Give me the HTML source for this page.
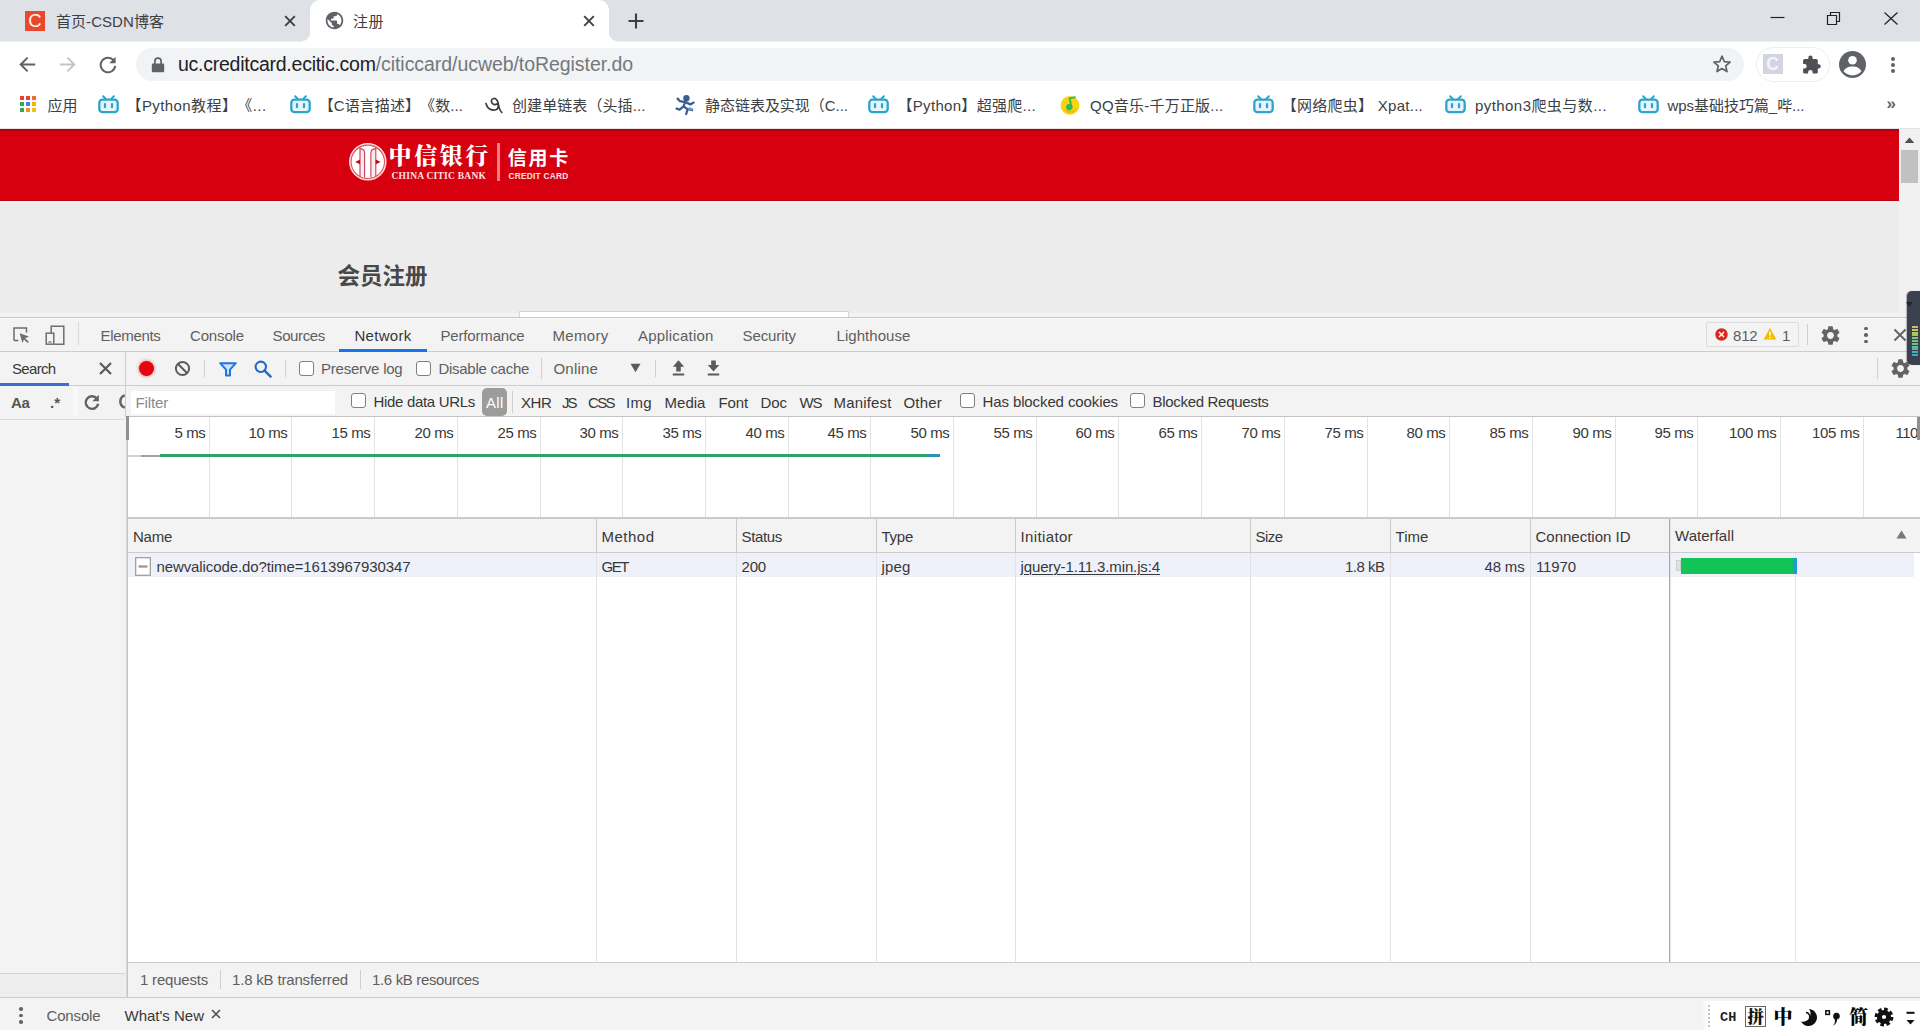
<!DOCTYPE html>
<html lang="zh">
<head>
<meta charset="utf-8">
<title>注册</title>
<style>
*{box-sizing:border-box;margin:0;padding:0}
html,body{width:1920px;height:1030px;overflow:hidden;background:#fff}
body{position:relative;font-family:"Liberation Sans","Noto Sans CJK SC",sans-serif;color:#333;text-spacing-trim:space-all}
.a{position:absolute;white-space:nowrap}
svg{position:absolute;overflow:visible}
.cb{position:absolute;width:15px;height:15px;border:1.2px solid #808080;border-radius:3px;background:#fff}
.vs{position:absolute;width:1px;background:#ccc}
</style>
</head>
<body>
<div class="a" style="left:0px;top:0px;width:1920px;height:41px;background:#dee1e6;"></div>
<div class="a" style="left:310px;top:0;width:299px;height:41px;background:#fff;border-radius:10px 10px 0 0"></div>
<svg style="left:302px;top:33px;" width="8" height="8" viewBox="0 0 8 8"><path d="M8 0 V8 H0 A8 8 0 0 0 8 0Z" fill="#fff"/></svg>
<svg style="left:609px;top:33px;" width="8" height="8" viewBox="0 0 8 8"><path d="M0 0 V8 H8 A8 8 0 0 1 0 0Z" fill="#fff"/></svg>
<div class="a" style="left:0px;top:41px;width:1920px;height:47px;background:#fff;"></div>
<div class="a" style="left:0px;top:41px;width:302px;height:1px;background:#eef0f3;"></div>
<div class="a" style="left:617px;top:41px;width:1303px;height:1px;background:#eef0f3;"></div>
<div class="a" style="left:0px;top:88px;width:1920px;height:40px;background:#fff;"></div>
<div class="a" style="left:0px;top:128px;width:1920px;height:1px;background:#e4e4e6;"></div>
<div class="a" style="left:25px;top:11px;width:20px;height:20px;background:#e9482d"></div>
<span class="a" style="left:28.2px;top:8.19px;font-size:18.5px;line-height:26px;color:#fff6e8;">C</span>
<span class="a" style="left:56px;top:10.90px;font-size:15px;line-height:21px;color:#3c4043;letter-spacing:0.056px;">首页-CSDN博客</span>
<svg style="left:283px;top:14px;" width="14" height="14" viewBox="0 0 14 14"><path d="M2.2 2.2 L11.8 11.8 M11.8 2.2 L2.2 11.8" stroke="#3c4043" stroke-width="1.9" fill="none"/></svg>
<svg style="left:323.6px;top:10.3px;" width="21" height="21" viewBox="0 0 24 24"><path d="M12 2C6.480 2 2 6.480 2 12s4.480 10 10 10 10-4.480 10-10S17.520 2 12 2zm-1 17.930c-3.950-.490-7-3.850-7-7.930 0-.620.080-1.210.210-1.790L9 15v1c0 1.100.900 2 2 2v1.930zm6.900-2.540c-.260-.810-1-1.390-1.900-1.390h-1v-3c0-.550-.450-1-1-1H8v-2h2c.550 0 1-.450 1-1V7h2c1.100 0 2-.900 2-2v-.410c2.930 1.190 5 4.060 5 7.410 0 2.080-.800 3.970-2.100 5.390z" fill="#5f6368"/></svg>
<span class="a" style="left:353px;top:10.90px;font-size:15px;line-height:21px;color:#3c4043;letter-spacing:0.492px;">注册</span>
<svg style="left:582px;top:14px;" width="14" height="14" viewBox="0 0 14 14"><path d="M2.2 2.2 L11.8 11.8 M11.8 2.2 L2.2 11.8" stroke="#3c4043" stroke-width="1.9" fill="none"/></svg>
<svg style="left:627px;top:12px;" width="18" height="18" viewBox="0 0 18 18"><path d="M9 1.5 V16.5 M1.5 9 H16.5" stroke="#3c4043" stroke-width="2.1" fill="none"/></svg>
<svg style="left:1770px;top:10px;" width="16" height="16" viewBox="0 0 16 16"><path d="M0.5 7.5 H14.5" stroke="#222" stroke-width="1.2"/></svg>
<svg style="left:1826px;top:11px;" width="16" height="16" viewBox="0 0 16 16"><path d="M1.5 4.5 H10.5 V13.5 H1.5 Z M4.5 4.5 V1.5 H13.5 V10.5 H10.5" stroke="#222" stroke-width="1.2" fill="none"/></svg>
<svg style="left:1883px;top:11px;" width="16" height="16" viewBox="0 0 16 16"><path d="M1.5 1.5 L14.5 13.5 M14.5 1.5 L1.5 13.5" stroke="#222" stroke-width="1.2" fill="none"/></svg>
<svg style="left:18px;top:55px;" width="19" height="19" viewBox="0 0 19 19"><path d="M17.2 9.5 H3 M9.6 2.6 L2.7 9.5 L9.6 16.4" stroke="#5f6368" stroke-width="2" fill="none"/></svg>
<svg style="left:58px;top:55px;" width="19" height="19" viewBox="0 0 19 19"><path d="M1.8 9.5 H16 M9.4 2.6 L16.3 9.5 L9.4 16.4" stroke="#c3c5c8" stroke-width="2" fill="none"/></svg>
<svg style="left:98px;top:55px;" width="20" height="20" viewBox="0 0 20 20"><path d="M15.6 5.4 A7.3 7.3 0 1 0 17.2 10.8" stroke="#5f6368" stroke-width="2" fill="none"/><path d="M17.6 1.8 V8.2 H11.2 Z" fill="#5f6368"/></svg>
<div class="a" style="left:136px;top:48px;width:1608px;height:33px;background:#f1f3f4;border-radius:17px"></div>
<svg style="left:151px;top:57px;" width="14" height="16" viewBox="0 0 14 16"><path d="M2 6.6 H12 a1.2 1.2 0 0 1 1.2 1.2 V14 a1.2 1.2 0 0 1 -1.2 1.2 H2 A1.2 1.2 0 0 1 .8 14 V7.8 A1.2 1.2 0 0 1 2 6.6Z" fill="#5f6368"/><path d="M3.9 7 V4.3 a3.1 3.1 0 0 1 6.2 0 V7" stroke="#5f6368" stroke-width="1.7" fill="none"/></svg>
<span class="a" style="left:178px;top:50.54px;font-size:19.5px;line-height:27px;color:#202124;letter-spacing:-0.251px;">uc.creditcard.ecitic.com</span>
<span class="a" style="left:375.7px;top:50.54px;font-size:19.5px;line-height:27px;color:#74787c;letter-spacing:-0.058px;">/citiccard/ucweb/toRegister.do</span>
<svg style="left:1712px;top:54px;" width="20" height="20" viewBox="0 0 20 20"><path d="M10 2.2 L12.3 7.6 L18.1 8.1 L13.7 11.9 L15 17.6 L10 14.6 L5 17.6 L6.3 11.9 L1.9 8.1 L7.7 7.6 Z" stroke="#5f6368" stroke-width="1.7" fill="none" stroke-linejoin="round"/></svg>
<div class="a" style="left:1756px;top:47px;width:74px;height:35px;background:#fff;border:1.5px solid #eceef0;border-radius:18px"></div>
<div class="a" style="left:1763px;top:54px;width:20px;height:20px;background:#d3d4e2"></div>
<span class="a" style="left:1766.2px;top:52.34px;font-size:17.5px;line-height:24px;color:#f4f4fa;font-weight:700;">C</span>
<svg style="left:1802px;top:55px;" width="20" height="20" viewBox="0 0 20 20"><path d="M17.1 9.2 h-1.3 V5.7 c0-.95-.8-1.7-1.7-1.7 h-3.5 V2.7 a2.15 2.15 0 0 0 -4.3 0 V4 H2.8 C1.85 4 1.1 4.75 1.1 5.7 V9 h1.3 a2.3 2.3 0 0 1 0 4.6 H1.1 v3.3 c0 .95.75 1.7 1.7 1.7 h3.3 v-1.3 a2.3 2.3 0 0 1 4.6 0 v1.3 h3.4 c.9 0 1.7-.75 1.7-1.7 v-3.5 h1.3 a2.15 2.15 0 0 0 0-4.2z" fill="#4d5156"/></svg>
<svg style="left:1839px;top:51px;" width="27" height="27" viewBox="0 0 27 27"><circle cx="13.5" cy="13.5" r="13.5" fill="#5f6368"/><circle cx="13.5" cy="9.3" r="4.3" fill="#fff"/><path d="M4.6 20.2 c1.6-3.4 5.4-4.6 8.9-4.6 s7.3 1.2 8.9 4.6 a11.4 11.4 0 0 1 -17.8 0z" fill="#fff"/></svg>
<div class="a" style="left:1890.6px;top:56.7px;width:4px;height:4px;border-radius:50%;background:#5f6368"></div>
<div class="a" style="left:1890.6px;top:63px;width:4px;height:4px;border-radius:50%;background:#5f6368"></div>
<div class="a" style="left:1890.6px;top:69.3px;width:4px;height:4px;border-radius:50%;background:#5f6368"></div>
<div class="a" style="left:20px;top:96px;width:4px;height:4px;background:#e94235"></div>
<div class="a" style="left:26px;top:96px;width:4px;height:4px;background:#e94235"></div>
<div class="a" style="left:32px;top:96px;width:4px;height:4px;background:#ee6a3a"></div>
<div class="a" style="left:20px;top:102px;width:4px;height:4px;background:#34a853"></div>
<div class="a" style="left:26px;top:102px;width:4px;height:4px;background:#3a86e8"></div>
<div class="a" style="left:32px;top:102px;width:4px;height:4px;background:#f4b400"></div>
<div class="a" style="left:20px;top:108px;width:4px;height:4px;background:#34a853"></div>
<div class="a" style="left:26px;top:108px;width:4px;height:4px;background:#f0932b"></div>
<div class="a" style="left:32px;top:108px;width:4px;height:4px;background:#f4c20d"></div>
<span class="a" style="left:47.5px;top:94.90px;font-size:15px;line-height:21px;color:#3c4043;letter-spacing:-0.008px;">应用</span>
<svg style="left:98px;top:95px;" width="21" height="19" viewBox="0 0 21 19"><path d="M5.2 1.2 L8.2 4.4 M15.8 1.2 L12.8 4.4" stroke="#2ea3cf" stroke-width="2" stroke-linecap="round"/><rect x="1.3" y="4.6" width="18.4" height="12.6" rx="3.2" fill="#e4f5fb" stroke="#2ea3cf" stroke-width="2.3"/><path d="M7 9 V12.2 M14 9 V12.2" stroke="#2ea3cf" stroke-width="2.2" stroke-linecap="round"/></svg>
<span class="a" style="left:126.5px;top:94.90px;font-size:15px;line-height:21px;color:#3c4043;letter-spacing:0.414px;">【Python教程】《...</span>
<svg style="left:289.6px;top:95px;" width="21" height="19" viewBox="0 0 21 19"><path d="M5.2 1.2 L8.2 4.4 M15.8 1.2 L12.8 4.4" stroke="#2ea3cf" stroke-width="2" stroke-linecap="round"/><rect x="1.3" y="4.6" width="18.4" height="12.6" rx="3.2" fill="#e4f5fb" stroke="#2ea3cf" stroke-width="2.3"/><path d="M7 9 V12.2 M14 9 V12.2" stroke="#2ea3cf" stroke-width="2.2" stroke-linecap="round"/></svg>
<span class="a" style="left:318.7px;top:94.90px;font-size:15px;line-height:21px;color:#3c4043;letter-spacing:0.080px;">【C语言描述】《数...</span>
<svg style="left:484px;top:95px;" width="20" height="20" viewBox="0 0 20 20"><path d="M2 8.5 c1 4 4 7 9 6.5 c2.5-.3 3.5-2.5 3.3-5.5 c-.2-3.5-2.2-6.3-4.6-6 c-2.3.3-3 3-1.5 4.8 c1.3 1.5 3.6 1.4 5.5.2 M14.4 9 c.5 3.5 1.4 6.500 3.4 8.5" stroke="#3b3b3b" stroke-width="1.7" fill="none" stroke-linecap="round"/></svg>
<span class="a" style="left:512px;top:94.90px;font-size:15px;line-height:21px;color:#3c4043;letter-spacing:0.089px;">创建单链表（头插...</span>
<svg style="left:675px;top:94px;" width="21" height="21" viewBox="0 0 21 21"><circle cx="11.4" cy="4.2" r="3.2" fill="#3d5f8f"/><path d="M10.5 6.5 L8.6 12.4 L12.6 15.2 L11.2 20 M8.600 12.4 L4.6 15.6 L1.6 14.6 M9.8 8.2 L5 7.2 L2.6 4.6 M11 8.4 L15.4 10.4 L18.6 8.6 M12.6 15.2 L17.2 16" stroke="#3d5f8f" stroke-width="2.3" fill="none" stroke-linecap="round" stroke-linejoin="round"/><path d="M14 13 l4 1.5 l-.8 2.2 l-3.800 -1z" fill="#58a0dc"/></svg>
<span class="a" style="left:705px;top:94.90px;font-size:15px;line-height:21px;color:#3c4043;letter-spacing:-0.029px;">静态链表及实现（C...</span>
<svg style="left:868px;top:95px;" width="21" height="19" viewBox="0 0 21 19"><path d="M5.2 1.2 L8.2 4.4 M15.8 1.2 L12.8 4.4" stroke="#2ea3cf" stroke-width="2" stroke-linecap="round"/><rect x="1.3" y="4.6" width="18.4" height="12.6" rx="3.2" fill="#e4f5fb" stroke="#2ea3cf" stroke-width="2.3"/><path d="M7 9 V12.2 M14 9 V12.2" stroke="#2ea3cf" stroke-width="2.2" stroke-linecap="round"/></svg>
<span class="a" style="left:897.5px;top:94.90px;font-size:15px;line-height:21px;color:#3c4043;letter-spacing:0.307px;">【Python】超强爬...</span>
<svg style="left:1060px;top:95px;" width="20" height="20" viewBox="0 0 20 20"><circle cx="10" cy="10.4" r="9.4" fill="#f8d312"/><path d="M3.4 12.5 a6.8 6.800 0 0 0 13.2 0 c-2 2.6-4.400 3.6-6.600 3.600 s-4.600-1-6.600-3.600z" fill="#e9b80c"/><circle cx="9.2" cy="12.2" r="3.1" fill="#2dbb55"/><path d="M11.6 12.4 L9.6 3.4 L14.8 2.2" stroke="#2dbb55" stroke-width="2" fill="none" stroke-linecap="round" stroke-linejoin="round"/></svg>
<span class="a" style="left:1090px;top:94.90px;font-size:15px;line-height:21px;color:#3c4043;letter-spacing:0.221px;">QQ音乐-千万正版...</span>
<svg style="left:1253px;top:95px;" width="21" height="19" viewBox="0 0 21 19"><path d="M5.2 1.2 L8.2 4.4 M15.8 1.2 L12.8 4.4" stroke="#2ea3cf" stroke-width="2" stroke-linecap="round"/><rect x="1.3" y="4.6" width="18.4" height="12.6" rx="3.2" fill="#e4f5fb" stroke="#2ea3cf" stroke-width="2.3"/><path d="M7 9 V12.2 M14 9 V12.2" stroke="#2ea3cf" stroke-width="2.2" stroke-linecap="round"/></svg>
<span class="a" style="left:1281.8px;top:94.90px;font-size:15px;line-height:21px;color:#3c4043;letter-spacing:0.262px;">【网络爬虫】 Xpat...</span>
<svg style="left:1445px;top:95px;" width="21" height="19" viewBox="0 0 21 19"><path d="M5.2 1.2 L8.2 4.4 M15.8 1.2 L12.8 4.4" stroke="#2ea3cf" stroke-width="2" stroke-linecap="round"/><rect x="1.3" y="4.6" width="18.4" height="12.6" rx="3.2" fill="#e4f5fb" stroke="#2ea3cf" stroke-width="2.3"/><path d="M7 9 V12.2 M14 9 V12.2" stroke="#2ea3cf" stroke-width="2.2" stroke-linecap="round"/></svg>
<span class="a" style="left:1475px;top:94.90px;font-size:15px;line-height:21px;color:#3c4043;letter-spacing:0.436px;">python3爬虫与数...</span>
<svg style="left:1638px;top:95px;" width="21" height="19" viewBox="0 0 21 19"><path d="M5.2 1.2 L8.2 4.4 M15.8 1.2 L12.8 4.4" stroke="#2ea3cf" stroke-width="2" stroke-linecap="round"/><rect x="1.3" y="4.6" width="18.4" height="12.6" rx="3.2" fill="#e4f5fb" stroke="#2ea3cf" stroke-width="2.3"/><path d="M7 9 V12.2 M14 9 V12.2" stroke="#2ea3cf" stroke-width="2.2" stroke-linecap="round"/></svg>
<span class="a" style="left:1667.5px;top:94.90px;font-size:15px;line-height:21px;color:#3c4043;letter-spacing:-0.041px;">wps基础技巧篇_哔...</span>
<span class="a" style="left:1886.5px;top:91.71px;font-size:17px;line-height:24px;color:#5f6368;font-weight:700;">»</span>
<div class="a" style="left:0px;top:129px;width:1899px;height:188px;background:#ececec;"></div>
<div class="a" style="left:0px;top:129px;width:1899px;height:72px;background:#d7000f;border-top:2px solid #b4000d;border-bottom:1px solid #b8000d"></div>
<div class="a" style="left:0px;top:201px;width:1899px;height:2px;background:#f4f4f8;"></div>
<div class="a" style="left:1899px;top:129px;width:21px;height:188px;background:#f1f1f1;"></div>
<svg style="left:1904px;top:136px;" width="11" height="8" viewBox="0 0 11 8"><path d="M5.500 1.400 L10.300 7 H.700 Z" fill="#505050"/></svg>
<div class="a" style="left:1901px;top:150px;width:17px;height:33px;background:#c1c1c1;"></div>
<svg style="left:348.5px;top:143.1px;" width="37.6" height="37.6" viewBox="0 0 37.6 37.6"><circle cx="18.800" cy="18.800" r="18.800" fill="#ffdada"/><circle cx="18.800" cy="18.800" r="16.700" fill="#fff" stroke="#e2505a" stroke-width="1.100"/><path d="M11 6 H15 V33 H11 Z M22.400 6 H26.800 V33 H22.400Z" fill="#fdeaee"/><path d="M11 4.800 V33.600 M26.800 4.800 V33.600 M15.600 34.600 V10 Q15.600 6.200 11.400 5.600 M21.900 34.600 V10 Q21.900 6.200 26.400 5.600" stroke="#c9475c" stroke-width="1.150" fill="none"/><path d="M6.200 18.900 L11 16.600 V21.200 Z M31.600 18.900 L26.800 16.600 V21.200 Z" fill="#d7000f"/></svg>
<span class="a" style="left:388.6px;top:141.23px;font-size:23px;line-height:32px;color:#fff;font-weight:900;letter-spacing:2.537px;font-family:'Liberation Serif','Noto Serif CJK SC',serif;">中信银行</span>
<span class="a" style="left:391.5px;top:169.61px;font-size:9.5px;line-height:13px;color:#ffe0e0;font-weight:700;letter-spacing:0.244px;font-family:'Liberation Serif',serif;">CHINA CITIC BANK</span>
<div class="a" style="left:497px;top:143px;width:3px;height:38px;background:#ef7f83;"></div>
<span class="a" style="left:507.8px;top:145.32px;font-size:19px;line-height:27px;color:#fff;font-weight:700;letter-spacing:1.728px;">信用卡</span>
<span class="a" style="left:508.5px;top:170.09px;font-size:8.4px;line-height:12px;color:#ffe0e0;font-weight:700;letter-spacing:0.209px;">CREDIT CARD</span>
<span class="a" style="left:337.5px;top:260.90px;font-size:22.5px;line-height:31px;color:#484848;font-weight:700;">会员注册</span>
<div class="a" style="left:0px;top:313px;width:1899px;height:4px;background:#f2f2f2;"></div>
<div class="a" style="left:519px;top:311px;width:330px;height:6px;background:#fff;border-top:1px solid #d2d2d2;border-left:1px solid #d8d8d8;border-right:1px solid #d8d8d8"></div>
<div class="a" style="left:0px;top:317px;width:1907px;height:1px;background:#c9c9c9;"></div>
<div class="a" style="left:0px;top:318px;width:1907px;height:1px;background:#f8f8f8;"></div>
<div class="a" style="left:0px;top:319px;width:1920px;height:32px;background:#f3f3f3;"></div>
<div class="a" style="left:0px;top:351px;width:1920px;height:1px;background:#cdcdcd;"></div>
<div class="a" style="left:0px;top:352px;width:1920px;height:33px;background:#f3f3f3;"></div>
<div class="a" style="left:0px;top:385px;width:1920px;height:1px;background:#cdcdcd;"></div>
<div class="a" style="left:0px;top:386px;width:1920px;height:31px;background:#f3f3f3;"></div>
<div class="a" style="left:0px;top:417px;width:126px;height:613px;background:#f3f3f3;"></div>
<div class="a" style="left:125px;top:352px;width:1px;height:65px;background:#cdcdcd;"></div>
<svg style="left:12px;top:326px;" width="19" height="19" viewBox="0 0 19 19"><path d="M2 14.5 V2 H14.5 V6.4 M2 14.5 H6.4" stroke="#6e6e6e" stroke-width="1.5" fill="none"/><path d="M7.6 7.2 L17 10.600 L13.2 12.2 L16.8 15.8 L15.600 17 L12 13.400 L10.400 17 Z" fill="#6e6e6e"/></svg>
<svg style="left:45px;top:325px;" width="20" height="21" viewBox="0 0 20 21"><path d="M6.2 8 V1.2 H18.8 V19.2 H9.4" stroke="#6e6e6e" stroke-width="1.5" fill="none"/><rect x="1.2" y="8.2" width="7.6" height="11" stroke="#6e6e6e" stroke-width="1.5" fill="#f3f3f3"/><path d="M3.400 17 H6.600" stroke="#6e6e6e" stroke-width="1.2"/></svg>
<div class="a" style="left:78px;top:322px;width:1px;height:23px;background:#d9d9d9;"></div>
<span class="a" style="left:100.5px;top:325.10px;font-size:15px;line-height:21px;color:#5e5e5e;letter-spacing:-0.316px;">Elements</span>
<span class="a" style="left:190px;top:325.10px;font-size:15px;line-height:21px;color:#5e5e5e;letter-spacing:-0.150px;">Console</span>
<span class="a" style="left:272.5px;top:325.10px;font-size:15px;line-height:21px;color:#5e5e5e;letter-spacing:-0.362px;">Sources</span>
<span class="a" style="left:354.5px;top:325.10px;font-size:15px;line-height:21px;color:#383838;letter-spacing:0.283px;">Network</span>
<span class="a" style="left:440.5px;top:325.10px;font-size:15px;line-height:21px;color:#5e5e5e;letter-spacing:-0.170px;">Performance</span>
<span class="a" style="left:552.5px;top:325.10px;font-size:15px;line-height:21px;color:#5e5e5e;letter-spacing:0.305px;">Memory</span>
<span class="a" style="left:638px;top:325.10px;font-size:15px;line-height:21px;color:#5e5e5e;letter-spacing:0.192px;">Application</span>
<span class="a" style="left:742.5px;top:325.10px;font-size:15px;line-height:21px;color:#5e5e5e;letter-spacing:-0.086px;">Security</span>
<span class="a" style="left:836.5px;top:325.10px;font-size:15px;line-height:21px;color:#5e5e5e;letter-spacing:0.059px;">Lighthouse</span>
<div class="a" style="left:339px;top:349px;width:88px;height:3px;background:#1a73e8;"></div>
<div class="a" style="left:1706px;top:322px;width:93px;height:25px;background:#f3f3f3;border:1px solid #dcdcdc;border-radius:2px"></div>
<svg style="left:1715px;top:328px;" width="13" height="13" viewBox="0 0 13 13"><circle cx="6.5" cy="6.5" r="6.2" fill="#e1251b"/><path d="M4 4 L9 9 M9 4 L4 9" stroke="#fff" stroke-width="1.500"/></svg>
<span class="a" style="left:1733px;top:325.10px;font-size:15px;line-height:21px;color:#5e5e5e;letter-spacing:-0.177px;">812</span>
<svg style="left:1763px;top:327px;" width="14" height="13" viewBox="0 0 14 13"><path d="M7 .800 L13.400 12.400 H.600 Z" fill="#f4bd00"/><path d="M7 4.600 V8.600 M7 9.800 V11.200" stroke="#fff" stroke-width="1.500"/></svg>
<span class="a" style="left:1782px;top:325.10px;font-size:15px;line-height:21px;color:#5e5e5e;letter-spacing:-0.344px;">1</span>
<div class="a" style="left:1807px;top:324px;width:1px;height:21px;background:#cfcfcf;"></div>
<svg style="left:1819px;top:324px;" width="23" height="23" viewBox="0 0 24 24"><path d="M19.140 12.940c.040-.3.060-.610.060-.940 0-.320-.020-.640-.070-.940l2.030-1.580a.490.490 0 0 0 .120-.610l-1.920-3.320a.488.488 0 0 0-.590-.220l-2.390.960c-.5-.380-1.030-.7-1.620-.940l-.360-2.540a.484.484 0 0 0-.480-.410h-3.840c-.240 0-.430.170-.470.410l-.360 2.540c-.590.240-1.130.570-1.620.940l-2.390-.960c-.220-.080-.470 0-.590.220L2.740 8.870c-.120.210-.080.470.120.610l2.030 1.580c-.050.3-.090.630-.090.940s.020.640.070.940l-2.030 1.580a.490.490 0 0 0-.120.610l1.920 3.320c.120.220.370.290.590.220l2.390-.960c.5.380 1.030.7 1.620.940l.360 2.540c.050.240.240.410.480.410h3.840c.240 0 .440-.170.470-.410l.360-2.540c.590-.240 1.130-.560 1.620-.940l2.390.960c.220.080.470 0 .590-.220l1.920-3.320c.120-.220.070-.470-.120-.610l-2.010-1.580zM12 15.600c-1.980 0-3.600-1.620-3.600-3.600s1.620-3.600 3.600-3.600 3.600 1.620 3.600 3.600-1.620 3.600-3.600 3.600z" fill="#636363"/></svg>
<div class="a" style="left:1864.2px;top:326.7px;width:3.600px;height:3.600px;border-radius:50%;background:#636363"></div>
<div class="a" style="left:1864.2px;top:333.2px;width:3.600px;height:3.600px;border-radius:50%;background:#636363"></div>
<div class="a" style="left:1864.2px;top:339.7px;width:3.600px;height:3.600px;border-radius:50%;background:#636363"></div>
<svg style="left:1893px;top:328px;" width="14" height="14" viewBox="0 0 14 14"><path d="M1.500 1.500 L12.500 12.500 M12.500 1.500 L1.500 12.500" stroke="#636363" stroke-width="1.900" fill="none"/></svg>
<span class="a" style="left:12px;top:357.90px;font-size:15px;line-height:21px;color:#383838;letter-spacing:-0.672px;">Search</span>
<div class="a" style="left:0px;top:383px;width:69px;height:3px;background:#3a6fd0;"></div>
<svg style="left:99px;top:362px;" width="13" height="13" viewBox="0 0 13 13"><path d="M1 1 L12 12 M12 1 L1 12" stroke="#5a5a5a" stroke-width="2.200" fill="none"/></svg>
<div class="a" style="left:139px;top:360.500px;width:15px;height:15px;border-radius:50%;background:#e20613;box-shadow:0 0 3px 1px rgba(240,60,60,.45)"></div>
<svg style="left:174px;top:360px;" width="17" height="17" viewBox="0 0 17 17"><circle cx="8.500" cy="8.500" r="6.600" stroke="#5a5a5a" stroke-width="2" fill="none"/><path d="M3.800 3.800 L13.200 13.200" stroke="#5a5a5a" stroke-width="2"/></svg>
<div class="a" style="left:204px;top:360px;width:1px;height:17px;background:#cfcfcf;"></div>
<svg style="left:219px;top:362px;" width="18" height="15" viewBox="0 0 18 15"><path d="M1.200 1.200 H16.800 L11 7.600 V13.600 H7 V7.600 Z" fill="#cfe0fb" stroke="#1f74e0" stroke-width="2" stroke-linejoin="round"/></svg>
<svg style="left:254px;top:360px;" width="18" height="18" viewBox="0 0 18 18"><circle cx="6.800" cy="6.800" r="5.200" stroke="#2467c4" stroke-width="2.100" fill="none"/><path d="M10.600 10.600 L16.600 16.600" stroke="#2467c4" stroke-width="2.400" stroke-linecap="round"/></svg>
<div class="a" style="left:285px;top:360px;width:1px;height:17px;background:#cfcfcf;"></div>
<div class="cb" style="left:299px;top:361px"></div>
<span class="a" style="left:321px;top:358.10px;font-size:15px;line-height:21px;color:#5e5e5e;letter-spacing:-0.227px;">Preserve log</span>
<div class="cb" style="left:416px;top:361px"></div>
<span class="a" style="left:438.5px;top:358.10px;font-size:15px;line-height:21px;color:#5e5e5e;letter-spacing:-0.286px;">Disable cache</span>
<div class="a" style="left:541px;top:358px;width:1px;height:21px;background:#cfcfcf;"></div>
<span class="a" style="left:553.5px;top:358.10px;font-size:15px;line-height:21px;color:#5e5e5e;letter-spacing:0.190px;">Online</span>
<svg style="left:630px;top:363px;" width="11" height="10" viewBox="0 0 11 10"><path d="M.500 .800 H10.500 L5.500 9.200 Z" fill="#5a5a5a"/></svg>
<div class="a" style="left:655px;top:360px;width:1px;height:17px;background:#cfcfcf;"></div>
<svg style="left:670px;top:359px;" width="17" height="18" viewBox="0 0 17 18"><path d="M8.500 1.200 L14.200 7.800 H10.800 V12.400 H6.200 V7.800 H2.800 Z M2.800 14.400 H14.200 V16.600 H2.800 Z" fill="#5a5a5a"/></svg>
<svg style="left:705px;top:359px;" width="17" height="18" viewBox="0 0 17 18"><path d="M8.500 12.600 L14.200 6 H10.800 V1.400 H6.200 V6 H2.800 Z M2.800 14.400 H14.200 V16.600 H2.800 Z" fill="#5a5a5a"/></svg>
<div class="a" style="left:1877px;top:358px;width:1px;height:21px;background:#cfcfcf;"></div>
<svg style="left:1889px;top:357px;" width="23" height="23" viewBox="0 0 24 24"><path d="M19.140 12.940c.040-.3.060-.610.060-.940 0-.320-.020-.640-.070-.940l2.030-1.580a.490.490 0 0 0 .120-.610l-1.920-3.320a.488.488 0 0 0-.590-.220l-2.390.960c-.5-.380-1.030-.7-1.620-.940l-.360-2.540a.484.484 0 0 0-.480-.410h-3.840c-.240 0-.430.170-.470.410l-.360 2.540c-.590.240-1.130.570-1.620.940l-2.390-.960c-.220-.080-.470 0-.590.220L2.740 8.870c-.120.210-.080.470.120.610l2.030 1.580c-.050.3-.090.630-.090.940s.020.640.070.940l-2.030 1.580a.490.490 0 0 0-.120.610l1.920 3.320c.120.220.370.290.590.220l2.390-.960c.5.380 1.030.7 1.620.940l.360 2.540c.050.240.240.410.480.410h3.840c.240 0 .440-.170.470-.410l.360-2.540c.590-.240 1.130-.560 1.620-.940l2.390.960c.220.080.470 0 .590-.220l1.920-3.320c.120-.220.070-.470-.120-.610l-2.010-1.580zM12 15.600c-1.980 0-3.600-1.620-3.600-3.600s1.620-3.600 3.600-3.600 3.600 1.620 3.600 3.600-1.620 3.600-3.600 3.600z" fill="#636363"/></svg>
<span class="a" style="left:11px;top:391.90px;font-size:15px;line-height:21px;color:#555;font-weight:700;letter-spacing:-0.344px;">Aa</span>
<span class="a" style="left:50px;top:391.90px;font-size:15px;line-height:21px;color:#555;font-weight:700;letter-spacing:-0.008px;">.*</span>
<div class="a" style="left:73px;top:387px;width:5px;height:29px;background:#f9f9f9;"></div>
<svg style="left:82.5px;top:393.5px;" width="17" height="17" viewBox="0 0 17 17"><path d="M13.800 4.400 A6.300 6.300 0 1 0 15.200 9.800" stroke="#636363" stroke-width="2.400" fill="none"/><path d="M15.800 .800 V7.200 H9.400 Z" fill="#636363"/></svg>
<svg style="left:116px;top:393px;" width="9" height="17" viewBox="0 0 9 17"><path d="M8.800 2.400 A6.400 6.400 0 0 0 8.800 14.600" stroke="#636363" stroke-width="2.500" fill="none"/></svg>
<div class="a" style="left:131px;top:391px;width:204px;height:23px;background:#fff;"></div>
<span class="a" style="left:135.5px;top:391.90px;font-size:15px;line-height:21px;color:#8a8a8a;letter-spacing:-0.141px;">Filter</span>
<div class="cb" style="left:351px;top:393px"></div>
<span class="a" style="left:373.5px;top:391.30px;font-size:15px;line-height:21px;color:#383838;letter-spacing:-0.314px;">Hide data URLs</span>
<div class="a" style="left:482px;top:388px;width:25px;height:28px;background:#9c9c9c;border-radius:5px"></div>
<span class="a" style="left:486px;top:391.90px;font-size:15px;line-height:21px;color:#fff;letter-spacing:0.276px;">All</span>
<div class="a" style="left:512px;top:391px;width:1px;height:22px;background:#cfcfcf;"></div>
<span class="a" style="left:521px;top:391.90px;font-size:15px;line-height:21px;color:#383838;letter-spacing:-0.391px;">XHR</span>
<span class="a" style="left:562px;top:391.90px;font-size:15px;line-height:21px;color:#383838;letter-spacing:-2.008px;">JS</span>
<span class="a" style="left:588px;top:391.90px;font-size:15px;line-height:21px;color:#383838;letter-spacing:-1.615px;">CSS</span>
<span class="a" style="left:626px;top:391.90px;font-size:15px;line-height:21px;color:#383838;letter-spacing:0.328px;">Img</span>
<span class="a" style="left:664.5px;top:391.90px;font-size:15px;line-height:21px;color:#383838;letter-spacing:0.028px;">Media</span>
<span class="a" style="left:718.5px;top:391.90px;font-size:15px;line-height:21px;color:#383838;letter-spacing:-0.129px;">Font</span>
<span class="a" style="left:760.5px;top:391.90px;font-size:15px;line-height:21px;color:#383838;letter-spacing:-0.062px;">Doc</span>
<span class="a" style="left:799.5px;top:391.90px;font-size:15px;line-height:21px;color:#383838;letter-spacing:-1.086px;">WS</span>
<span class="a" style="left:833.5px;top:391.90px;font-size:15px;line-height:21px;color:#383838;letter-spacing:0.162px;">Manifest</span>
<span class="a" style="left:903.5px;top:391.90px;font-size:15px;line-height:21px;color:#383838;letter-spacing:0.197px;">Other</span>
<div class="cb" style="left:960px;top:393px"></div>
<span class="a" style="left:982.5px;top:391.30px;font-size:15px;line-height:21px;color:#383838;letter-spacing:-0.109px;">Has blocked cookies</span>
<div class="cb" style="left:1130px;top:393px"></div>
<span class="a" style="left:1152.5px;top:391.30px;font-size:15px;line-height:21px;color:#383838;letter-spacing:-0.307px;">Blocked Requests</span>
<div class="a" style="left:0px;top:419px;width:125px;height:1px;background:#dcdcdc;"></div>
<div class="a" style="left:0px;top:973px;width:125px;height:1px;background:#d4d4d4;"></div>
<div class="a" style="left:0px;top:974px;width:125px;height:23px;background:#eeeeee;"></div>
<div class="a" style="left:126px;top:416px;width:1794px;height:1px;background:#c4c4c4;"></div>
<div class="a" style="left:127px;top:417px;width:1793px;height:100px;background:#fff;"></div>
<div class="a" style="left:126px;top:417px;width:1px;height:581px;background:#d6d6d6;"></div>
<div class="a" style="left:127px;top:417px;width:1px;height:581px;background:#c6c6c6;"></div>
<div class="a" style="left:126px;top:416px;width:3px;height:24px;background:#909090;"></div>
<div class="a" style="left:209px;top:417px;width:1px;height:100px;background:#e3e3e3;"></div>
<span class="a" style="left:174.5px;top:422.30px;font-size:15px;line-height:21px;color:#383838;letter-spacing:-0.379px;">5 ms</span>
<div class="a" style="left:291px;top:417px;width:1px;height:100px;background:#e3e3e3;"></div>
<span class="a" style="left:248.5px;top:422.30px;font-size:15px;line-height:21px;color:#383838;letter-spacing:-0.372px;">10 ms</span>
<div class="a" style="left:374px;top:417px;width:1px;height:100px;background:#e3e3e3;"></div>
<span class="a" style="left:331.5px;top:422.30px;font-size:15px;line-height:21px;color:#383838;letter-spacing:-0.372px;">15 ms</span>
<div class="a" style="left:457px;top:417px;width:1px;height:100px;background:#e3e3e3;"></div>
<span class="a" style="left:414.5px;top:422.30px;font-size:15px;line-height:21px;color:#383838;letter-spacing:-0.372px;">20 ms</span>
<div class="a" style="left:540px;top:417px;width:1px;height:100px;background:#e3e3e3;"></div>
<span class="a" style="left:497.5px;top:422.30px;font-size:15px;line-height:21px;color:#383838;letter-spacing:-0.372px;">25 ms</span>
<div class="a" style="left:622px;top:417px;width:1px;height:100px;background:#e3e3e3;"></div>
<span class="a" style="left:579.5px;top:422.30px;font-size:15px;line-height:21px;color:#383838;letter-spacing:-0.372px;">30 ms</span>
<div class="a" style="left:705px;top:417px;width:1px;height:100px;background:#e3e3e3;"></div>
<span class="a" style="left:662.5px;top:422.30px;font-size:15px;line-height:21px;color:#383838;letter-spacing:-0.372px;">35 ms</span>
<div class="a" style="left:788px;top:417px;width:1px;height:100px;background:#e3e3e3;"></div>
<span class="a" style="left:745.5px;top:422.30px;font-size:15px;line-height:21px;color:#383838;letter-spacing:-0.372px;">40 ms</span>
<div class="a" style="left:870px;top:417px;width:1px;height:100px;background:#e3e3e3;"></div>
<span class="a" style="left:827.5px;top:422.30px;font-size:15px;line-height:21px;color:#383838;letter-spacing:-0.372px;">45 ms</span>
<div class="a" style="left:953px;top:417px;width:1px;height:100px;background:#e3e3e3;"></div>
<span class="a" style="left:910.5px;top:422.30px;font-size:15px;line-height:21px;color:#383838;letter-spacing:-0.372px;">50 ms</span>
<div class="a" style="left:1036px;top:417px;width:1px;height:100px;background:#e3e3e3;"></div>
<span class="a" style="left:993.5px;top:422.30px;font-size:15px;line-height:21px;color:#383838;letter-spacing:-0.372px;">55 ms</span>
<div class="a" style="left:1118px;top:417px;width:1px;height:100px;background:#e3e3e3;"></div>
<span class="a" style="left:1075.5px;top:422.30px;font-size:15px;line-height:21px;color:#383838;letter-spacing:-0.372px;">60 ms</span>
<div class="a" style="left:1201px;top:417px;width:1px;height:100px;background:#e3e3e3;"></div>
<span class="a" style="left:1158.5px;top:422.30px;font-size:15px;line-height:21px;color:#383838;letter-spacing:-0.372px;">65 ms</span>
<div class="a" style="left:1284px;top:417px;width:1px;height:100px;background:#e3e3e3;"></div>
<span class="a" style="left:1241.5px;top:422.30px;font-size:15px;line-height:21px;color:#383838;letter-spacing:-0.372px;">70 ms</span>
<div class="a" style="left:1367px;top:417px;width:1px;height:100px;background:#e3e3e3;"></div>
<span class="a" style="left:1324.5px;top:422.30px;font-size:15px;line-height:21px;color:#383838;letter-spacing:-0.372px;">75 ms</span>
<div class="a" style="left:1449px;top:417px;width:1px;height:100px;background:#e3e3e3;"></div>
<span class="a" style="left:1406.5px;top:422.30px;font-size:15px;line-height:21px;color:#383838;letter-spacing:-0.372px;">80 ms</span>
<div class="a" style="left:1532px;top:417px;width:1px;height:100px;background:#e3e3e3;"></div>
<span class="a" style="left:1489.5px;top:422.30px;font-size:15px;line-height:21px;color:#383838;letter-spacing:-0.372px;">85 ms</span>
<div class="a" style="left:1615px;top:417px;width:1px;height:100px;background:#e3e3e3;"></div>
<span class="a" style="left:1572.5px;top:422.30px;font-size:15px;line-height:21px;color:#383838;letter-spacing:-0.372px;">90 ms</span>
<div class="a" style="left:1697px;top:417px;width:1px;height:100px;background:#e3e3e3;"></div>
<span class="a" style="left:1654.5px;top:422.30px;font-size:15px;line-height:21px;color:#383838;letter-spacing:-0.372px;">95 ms</span>
<div class="a" style="left:1780px;top:417px;width:1px;height:100px;background:#e3e3e3;"></div>
<span class="a" style="left:1729.0px;top:422.30px;font-size:15px;line-height:21px;color:#383838;letter-spacing:-0.284px;">100 ms</span>
<div class="a" style="left:1863px;top:417px;width:1px;height:100px;background:#e3e3e3;"></div>
<span class="a" style="left:1812.0px;top:422.30px;font-size:15px;line-height:21px;color:#383838;letter-spacing:-0.284px;">105 ms</span>
<span class="a" style="left:1895.5px;top:422.30px;font-size:15px;line-height:21px;color:#383838;width:21.500px;overflow:hidden;letter-spacing:-.550px;">110</span>
<div class="a" style="left:128px;top:455px;width:14px;height:2px;background:#d2d2d2;"></div>
<div class="a" style="left:141px;top:455px;width:19px;height:2px;background:#a2a2a2;"></div>
<div class="a" style="left:160px;top:454px;width:780px;height:3px;background:#2fa468;"></div>
<div class="a" style="left:928px;top:454px;width:12px;height:3px;background:#2b93b3;"></div>
<div class="a" style="left:126px;top:517px;width:1794px;height:2px;background:#cbcbcb;"></div>
<div class="a" style="left:128px;top:519px;width:1792px;height:33px;background:#f3f3f3;"></div>
<div class="a" style="left:128px;top:552px;width:1792px;height:1px;background:#cdcdcd;"></div>
<div class="a" style="left:128px;top:553px;width:1792px;height:409px;background:#fff;"></div>
<div class="a" style="left:128px;top:553px;width:1786px;height:24px;background:#eef1fa;"></div>
<div class="a" style="left:596px;top:519px;width:1px;height:33px;background:#c8c8c8;"></div>
<div class="a" style="left:596px;top:553px;width:1px;height:409px;background:#e2e2e2;"></div>
<div class="a" style="left:736px;top:519px;width:1px;height:33px;background:#c8c8c8;"></div>
<div class="a" style="left:736px;top:553px;width:1px;height:409px;background:#e2e2e2;"></div>
<div class="a" style="left:876px;top:519px;width:1px;height:33px;background:#c8c8c8;"></div>
<div class="a" style="left:876px;top:553px;width:1px;height:409px;background:#e2e2e2;"></div>
<div class="a" style="left:1015px;top:519px;width:1px;height:33px;background:#c8c8c8;"></div>
<div class="a" style="left:1015px;top:553px;width:1px;height:409px;background:#e2e2e2;"></div>
<div class="a" style="left:1250px;top:519px;width:1px;height:33px;background:#c8c8c8;"></div>
<div class="a" style="left:1250px;top:553px;width:1px;height:409px;background:#e2e2e2;"></div>
<div class="a" style="left:1390px;top:519px;width:1px;height:33px;background:#c8c8c8;"></div>
<div class="a" style="left:1390px;top:553px;width:1px;height:409px;background:#e2e2e2;"></div>
<div class="a" style="left:1530px;top:519px;width:1px;height:33px;background:#c8c8c8;"></div>
<div class="a" style="left:1530px;top:553px;width:1px;height:409px;background:#e2e2e2;"></div>
<div class="a" style="left:1669px;top:519px;width:1px;height:443px;background:#aaaaaa;"></div>
<div class="a" style="left:1670px;top:519px;width:1px;height:443px;background:#e4e4e4;"></div>
<div class="a" style="left:1795px;top:553px;width:1px;height:409px;background:#e6e6e6;"></div>
<span class="a" style="left:133px;top:526.10px;font-size:15px;line-height:21px;color:#383838;letter-spacing:-0.254px;">Name</span>
<span class="a" style="left:601.5px;top:526.10px;font-size:15px;line-height:21px;color:#383838;letter-spacing:0.492px;">Method</span>
<span class="a" style="left:741.5px;top:526.10px;font-size:15px;line-height:21px;color:#383838;letter-spacing:-0.339px;">Status</span>
<span class="a" style="left:881.5px;top:526.10px;font-size:15px;line-height:21px;color:#383838;letter-spacing:-0.258px;">Type</span>
<span class="a" style="left:1020.5px;top:526.10px;font-size:15px;line-height:21px;color:#383838;letter-spacing:0.366px;">Initiator</span>
<span class="a" style="left:1255.5px;top:526.10px;font-size:15px;line-height:21px;color:#383838;letter-spacing:-0.547px;">Size</span>
<span class="a" style="left:1395.5px;top:526.10px;font-size:15px;line-height:21px;color:#383838;letter-spacing:0.055px;">Time</span>
<span class="a" style="left:1535.5px;top:526.10px;font-size:15px;line-height:21px;color:#383838;letter-spacing:-0.005px;">Connection ID</span>
<span class="a" style="left:1675px;top:525.30px;font-size:15px;line-height:21px;color:#383838;letter-spacing:0.042px;">Waterfall</span>
<svg style="left:1896px;top:530px;" width="11" height="9" viewBox="0 0 11 9"><path d="M5.500 .500 L10.600 8.600 H.400 Z" fill="#777"/></svg>
<svg style="left:135px;top:557px;" width="16" height="19" viewBox="0 0 16 19"><rect x=".700" y=".700" width="14.600" height="17.600" fill="#fff" stroke="#9a9a9a" stroke-width="1.200"/><path d="M3.600 9.500 H12.400" stroke="#a08a8a" stroke-width="2.200"/></svg>
<span class="a" style="left:156.5px;top:555.90px;font-size:15px;line-height:21px;color:#383838;letter-spacing:-0.100px;">newvalicode.do?time=1613967930347</span>
<span class="a" style="left:601.5px;top:555.90px;font-size:15px;line-height:21px;color:#383838;letter-spacing:-1.448px;">GET</span>
<span class="a" style="left:741.5px;top:555.90px;font-size:15px;line-height:21px;color:#383838;letter-spacing:-0.177px;">200</span>
<span class="a" style="left:881.5px;top:555.90px;font-size:15px;line-height:21px;color:#383838;letter-spacing:0.160px;">jpeg</span>
<span class="a" style="left:1020.5px;top:555.90px;font-size:15px;line-height:21px;color:#383838;letter-spacing:-0.127px;text-decoration:underline;text-underline-offset:2px;text-decoration-thickness:1px;">jquery-1.11.3.min.js:4</span>
<span class="a" style="left:1345px;top:555.90px;font-size:15px;line-height:21px;color:#383838;letter-spacing:-0.505px;">1.8 kB</span>
<span class="a" style="left:1484.5px;top:555.90px;font-size:15px;line-height:21px;color:#383838;letter-spacing:-0.172px;">48 ms</span>
<span class="a" style="left:1536px;top:555.90px;font-size:15px;line-height:21px;color:#383838;letter-spacing:-0.122px;">11970</span>
<div class="a" style="left:1676px;top:560px;width:5px;height:11px;background:#dfe3e0;border:1px solid #c9cfcb"></div>
<div class="a" style="left:1681px;top:558px;width:116px;height:16px;background:#12c455;"></div>
<div class="a" style="left:1793px;top:558px;width:4px;height:16px;background:#1f9bd3;"></div>
<div class="a" style="left:128px;top:962px;width:1792px;height:1px;background:#cdcdcd;"></div>
<div class="a" style="left:128px;top:963px;width:1792px;height:34px;background:#f3f3f3;"></div>
<div class="a" style="left:0px;top:997px;width:1920px;height:1px;background:#cdcdcd;"></div>
<div class="a" style="left:0px;top:998px;width:1920px;height:32px;background:#f3f3f3;"></div>
<span class="a" style="left:140px;top:969.30px;font-size:15px;line-height:21px;color:#5e5e5e;letter-spacing:-0.205px;">1 requests</span>
<div class="a" style="left:220px;top:970px;width:1px;height:19px;background:#cfcfcf;"></div>
<span class="a" style="left:232px;top:969.30px;font-size:15px;line-height:21px;color:#5e5e5e;letter-spacing:-0.180px;">1.8 kB transferred</span>
<div class="a" style="left:360px;top:970px;width:1px;height:19px;background:#cfcfcf;"></div>
<span class="a" style="left:372px;top:969.30px;font-size:15px;line-height:21px;color:#5e5e5e;letter-spacing:-0.348px;">1.6 kB resources</span>
<div class="a" style="left:19.200px;top:1007.4px;width:3.600px;height:3.600px;border-radius:50%;background:#636363"></div>
<div class="a" style="left:19.200px;top:1013.9px;width:3.600px;height:3.600px;border-radius:50%;background:#636363"></div>
<div class="a" style="left:19.200px;top:1020.4px;width:3.600px;height:3.600px;border-radius:50%;background:#636363"></div>
<span class="a" style="left:46.5px;top:1005.30px;font-size:15px;line-height:21px;color:#5e5e5e;letter-spacing:-0.150px;">Console</span>
<span class="a" style="left:124.5px;top:1005.30px;font-size:15px;line-height:21px;color:#383838;letter-spacing:-0.006px;">What&#x27;s New</span>
<svg style="left:211px;top:1009px;" width="10" height="10" viewBox="0 0 10 10"><path d="M1 1 L9 9 M9 1 L1 9" stroke="#555" stroke-width="1.700" fill="none"/></svg>
<div class="a" style="left:1702px;top:1001px;width:218px;height:29px;background:linear-gradient(90deg,#f3f3f3 0,#fff 6px,#fff 100%)"></div>
<div class="a" style="left:1708px;top:1005px;width:2px;height:2px;background:#b9c3d2;"></div>
<div class="a" style="left:1708px;top:1009px;width:2px;height:2px;background:#b9c3d2;"></div>
<div class="a" style="left:1708px;top:1013px;width:2px;height:2px;background:#b9c3d2;"></div>
<div class="a" style="left:1708px;top:1017px;width:2px;height:2px;background:#b9c3d2;"></div>
<div class="a" style="left:1708px;top:1021px;width:2px;height:2px;background:#b9c3d2;"></div>
<div class="a" style="left:1708px;top:1025px;width:2px;height:2px;background:#b9c3d2;"></div>
<span class="a" style="left:1720px;top:1007.52px;font-size:13.5px;line-height:19px;color:#222;font-weight:700;letter-spacing:0.148px;font-family:'Liberation Mono',monospace;">CH</span>
<div class="a" style="left:1745px;top:1006px;width:21px;height:21px;border:1px solid #666;background:#fff"></div>
<span class="a" style="left:1747.5px;top:1006.08px;font-size:16.5px;line-height:23px;color:#111;font-weight:900;font-family:'Liberation Serif','Noto Serif CJK SC',serif;">拼</span>
<span class="a" style="left:1773.5px;top:1004.22px;font-size:19px;line-height:27px;color:#000;font-weight:900;font-family:'Liberation Serif','Noto Serif CJK SC',serif;">中</span>
<svg style="left:1800px;top:1008px;" width="18" height="19" viewBox="0 0 18 19"><path d="M9 1 A8.500 8.500 0 1 1 1 13.500 A8 8 0 0 0 9 1Z" fill="#111"/><path d="M6 4.500 a4 4 0 0 1 3.500 5.500" stroke="#111" stroke-width="1.600" fill="none"/></svg>
<svg style="left:1825px;top:1008px;" width="16" height="19" viewBox="0 0 16 19"><rect x=".800" y="2.800" width="3.600" height="3.600" fill="none" stroke="#111" stroke-width="1.500"/><path d="M8.200 8.200 a3.300 3.300 0 1 1 3.800 3.200 c.300 2.800-1.300 5-4.400 6.400 c1.900-1.700 2.700-3.600 2.200-6.400 a3.300 3.300 0 0 1 -1.600-3.200z" fill="#111"/></svg>
<span class="a" style="left:1849.3px;top:1004.22px;font-size:19px;line-height:27px;color:#000;font-weight:900;font-family:'Liberation Serif','Noto Serif CJK SC',serif;">简</span>
<svg style="left:1874px;top:1007px;" width="20" height="20" viewBox="0 0 20 20"><circle cx="10" cy="10" r="4.600" fill="none" stroke="#111" stroke-width="5"/><circle cx="10" cy="10" r="7.800" fill="none" stroke="#111" stroke-width="3.200" stroke-dasharray="3.600 2.500"/></svg>
<svg style="left:1906px;top:1010px;" width="9" height="16" viewBox="0 0 9 16"><path d="M.500 2.800 H8.500" stroke="#111" stroke-width="2"/><path d="M.500 10 H8.500 L4.500 14.500Z" fill="#111"/></svg>
<div class="a" style="left:1917px;top:417px;width:3px;height:23px;background:#909090;"></div>
<div class="a" style="left:1907px;top:291px;width:13px;height:74px;background:#3c4150;border-radius:5px 0 0 5px;box-shadow:-1px 0 1px rgba(60,65,80,.35)"></div>
<svg style="left:1906px;top:302px;" width="7" height="5" viewBox="0 0 7 5"><path d="M0 0 H7 L3.500 5Z" fill="#23262f"/></svg>
<div class="a" style="left:1912px;top:326.0px;width:6px;height:2px;background:#c9c25a"></div>
<div class="a" style="left:1912px;top:328.8px;width:6px;height:2px;background:#c3c65a"></div>
<div class="a" style="left:1912px;top:331.6px;width:6px;height:2px;background:#b4c85c"></div>
<div class="a" style="left:1912px;top:334.4px;width:6px;height:2px;background:#9cc860"></div>
<div class="a" style="left:1912px;top:337.2px;width:6px;height:2px;background:#86c866"></div>
<div class="a" style="left:1912px;top:340.0px;width:6px;height:2px;background:#74c772"></div>
<div class="a" style="left:1912px;top:342.8px;width:6px;height:2px;background:#62c582"></div>
<div class="a" style="left:1912px;top:345.6px;width:6px;height:2px;background:#55c096"></div>
<div class="a" style="left:1912px;top:348.4px;width:6px;height:2px;background:#4cb9a8"></div>
<div class="a" style="left:1912px;top:351.2px;width:6px;height:2px;background:#46b0b8"></div>
<div class="a" style="left:1912px;top:354.0px;width:6px;height:2px;background:#44a6c4"></div>
</body>
</html>
